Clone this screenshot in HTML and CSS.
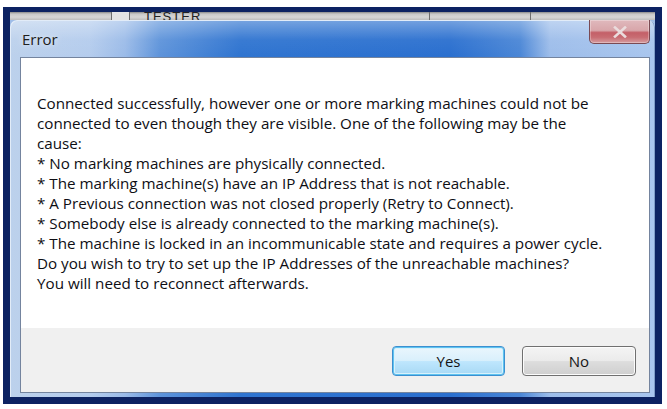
FILE: index.html
```html
<!DOCTYPE html>
<html>
<head>
<meta charset="utf-8">
<link rel="stylesheet" href="styles.css">
</head>
<body>
<div class="frame">
  <div class="behind">
    <span class="seg seg-a"></span>
    <span class="seg seg-b"></span>
    <span class="tester">TESTER</span>
    <span class="seg seg-c"></span>
    <span class="seg seg-d"></span>
  </div>
  <div class="window">
    <div class="titlebar">
      <span class="title">Error</span>
      <div class="close">
        <svg width="16" height="12" viewBox="0 0 16 12"><path d="M3 1.5 L13 10.5 M13 1.5 L3 10.5" stroke="#eadcdd" stroke-width="2.6" stroke-linecap="square"/></svg>
      </div>
    </div>
    <div class="client">
      <div class="message">
        <p>Connected successfully, however one or more marking machines could not be<br>connected to even though they are visible. One of the following may be the<br>cause:<br>* No marking machines are physically connected.<br>* The marking machine(s) have an IP Address that is not reachable.<br>* A Previous connection was not closed properly (Retry to Connect).<br>* Somebody else is already connected to the marking machine(s).<br>* The machine is locked in an incommunicable state and requires a power cycle.<br>Do you wish to try to set up the IP Addresses of the unreachable machines?<br>You will need to reconnect afterwards.</p>
      </div>
      <div class="buttons">
        <button class="btn btn-default">Yes</button>
        <button class="btn">No</button>
      </div>
    </div>
  </div>
</div>
</body>
</html>
```

FILE: styles.css
```css
html, body {
  margin: 0;
  padding: 0;
  background: #ffffff;
}

.frame {
  margin: 7px 0 0 3px;
  width: 645px;
  height: 385px;
  border-style: solid;
  border-color: #0c2262;
  border-width: 5px 7px 7px 7px;
  display: flex;
  flex-direction: column;
  background: #9fbde8;
}

.behind {
  height: 8px;
  flex: none;
  display: flex;
  align-items: stretch;
  background: linear-gradient(#8a8a8a 0, #c8c8c8 2px, #d6d6d6 5px, #bdbdbd 8px);
  overflow: hidden;
}

.seg {
  display: block;
  border-right: 1px solid #6e6e6e;
}
.seg-a { width: 101px; }
.seg-b { width: 17px; background: #e4e4e4; }
.seg-c { width: 225px; }
.seg-d { width: 100px; }

.tester {
  font-family: "Liberation Sans", Arial, sans-serif;
  font-size: 13px;
  line-height: 13px;
  color: #222;
  margin-top: -2px;
  margin-left: 14px;
  width: 60px;
  letter-spacing: 1px;
}

.window {
  flex: 1;
  display: flex;
  flex-direction: column;
  padding: 0 5px 4px 10px;
  border-radius: 7px 7px 0 0;
  background:
    linear-gradient(180deg, rgba(255,255,255,0.35) 0, rgba(255,255,255,0.05) 20px, rgba(255,255,255,0) 37px),
    linear-gradient(90deg, #bcd1ec 0, #b4cced 80px, #9bbbe8 115px, #5d93da 150px, #2f74d0 230px, #2a6fcf 440px, #4a86d6 510px, #9dbdea 540px, #a9c6ee 100%);
  box-shadow: inset 1px 1px 0 #e2ecf8, inset -1px 0 0 #7e9cc8;
}

.titlebar {
  height: 37px;
  flex: none;
  display: flex;
  justify-content: space-between;
  align-items: flex-start;
}

.title {
  font-family: "Open Sans", "Noto Sans", sans-serif;
  font-size: 15px;
  line-height: 15px;
  color: #202020;
  margin-top: 12px;
  margin-left: 2px;
  text-shadow: 0 0 6px rgba(255,255,255,0.9);
}

.close {
  width: 61px;
  height: 24px;
  border: 1px solid #7a4a53;
  border-top: none;
  border-radius: 0 0 5px 5px;
  box-sizing: border-box;
  background: linear-gradient(180deg, #e0b9bd 0, #d8a6aa 45%, #c46068 55%, #c86c72 75%, #d69ca0 100%);
  display: flex;
  align-items: center;
  justify-content: center;
  box-shadow: inset 0 0 0 1px rgba(255,255,255,0.3);
}

.client {
  flex: 1;
  display: flex;
  flex-direction: column;
  border: 1px solid #74849e;
  background: #f0f0f0;
}

.message {
  flex: 1;
  background: #ffffff;
  padding: 35px 16px 0 16px;
}

.message p {
  margin: 0;
  font-family: "Open Sans", "Noto Sans", sans-serif;
  font-size: 15.2px;
  line-height: 20px;
  color: #0e0e14;
  white-space: nowrap;
}

.buttons {
  height: 64px;
  flex: none;
  display: flex;
  justify-content: flex-end;
  align-items: flex-start;
  gap: 17px;
  padding: 18px 13px 0 0;
  box-sizing: border-box;
  background: #f0f0f0;
}

.btn {
  width: 114px;
  height: 30px;
  box-sizing: border-box;
  font-family: "Open Sans", "Noto Sans", sans-serif;
  font-size: 15px;
  color: #151515;
  border: 1px solid #707070;
  border-radius: 4px;
  background: linear-gradient(180deg, #f4f4f4 0, #ebebeb 48%, #dddddd 52%, #cfcfcf 100%);
  box-shadow: inset 0 0 0 1px #fcfcfc;
  padding: 0;
}

.btn-default {
  width: 113px;
  border: 1px solid #3c8fd0;
  background: linear-gradient(180deg, #eaf6fd 0, #d9f0fc 48%, #bee6fd 52%, #a7d9f5 100%);
  box-shadow: inset 0 0 0 1px #5ec3f0, inset 0 0 0 2px #d8f1fc;
}
```
